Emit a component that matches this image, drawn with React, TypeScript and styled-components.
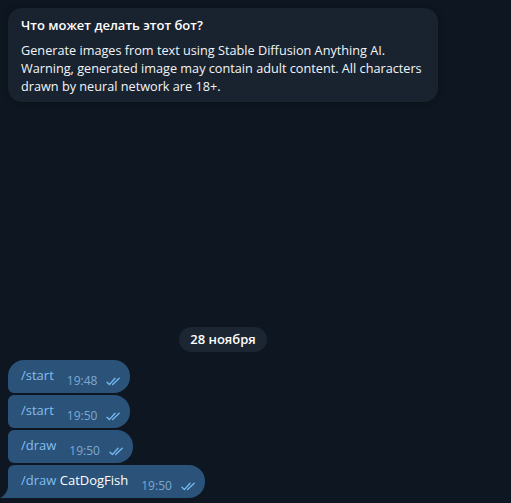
import React from "react";
import styled, { createGlobalStyle } from "styled-components";

const Global = createGlobalStyle`
  html, body { margin: 0; padding: 0; background: #0e1621; }
  body { font-family: "Open Sans", "Noto Sans", sans-serif; -webkit-font-smoothing: antialiased; }
  * { box-sizing: border-box; }
`;

const Page = styled.div`
  width: 511px;
  height: 503px;
  background: #0e1621;
  overflow: hidden;
  display: flex;
`;

const Chat = styled.div`
  width: 446px;
  height: 100%;
  padding: 8px 8px 5px 8px;
  display: flex;
  flex-direction: column;
`;

const InfoCard = styled.div`
  background: #19232f;
  border-radius: 14px;
  padding: 8px 13px 7px 13px;
  color: #ffffff;
  box-shadow: 0 0 6px rgba(0, 0, 0, 0.25);
`;

const InfoTitle = styled.div`
  font-weight: 600;
  font-size: 13px;
  line-height: 18px;
  margin-bottom: 7px;
`;

const InfoText = styled.div`
  font-size: 12.7px;
  line-height: 18px;
  color: #f2f5f8;
`;

const Spacer = styled.div`
  flex: 1;
`;

const DateRow = styled.div`
  display: flex;
  justify-content: center;
  margin-bottom: 8px;
`;

const DatePill = styled.div`
  height: 25px;
  padding: 0 11px;
  border-radius: 13px;
  background: #1b2632;
  color: #ffffff;
  font-weight: 600;
  font-size: 13px;
  line-height: 25px;
`;

const Messages = styled.div`
  display: flex;
  flex-direction: column;
  align-items: flex-start;
  gap: 2px;
`;

const Bubble = styled.div<{ $first?: boolean; $last?: boolean }>`
  position: relative;
  display: inline-flex;
  align-items: flex-end;
  background: #2b5278;
  padding: 6px 8px 4px 13px;
  border-radius: ${(p) => (p.$first ? "16px" : "6px")} 16px 16px
    ${(p) => (p.$last ? "0" : "6px")};
`;

const Tail = styled.svg`
  position: absolute;
  left: -8px;
  bottom: 0;
  width: 9px;
  height: 14px;
`;

const Text = styled.span`
  font-size: 13px;
  line-height: 18px;
  margin-bottom: 5px;
  color: #ffffff;
  white-space: nowrap;
`;

const Command = styled.span`
  color: #82bff0;
`;

const Meta = styled.span`
  display: inline-flex;
  align-items: center;
  margin-left: 13px;
  font-size: 12px;
  line-height: 16px;
  color: #7da8d3;
  white-space: nowrap;
`;

const Check = styled.svg`
  margin-left: 9px;
  width: 16px;
  height: 9px;
  margin-top: 1px;
`;

const DoubleCheck = () => (
  <Check viewBox="0 0 16 9" fill="none">
    <path d="M1 5.2 L3.4 7.6 L9 1.2" stroke="#72b8f0" strokeWidth="1.4" strokeLinecap="round" strokeLinejoin="round" />
    <path d="M6.6 7.6 L13.2 1.2" stroke="#72b8f0" strokeWidth="1.4" strokeLinecap="round" />
  </Check>
);

type Msg = { cmd: string; rest?: string; time: string };

const messages: Msg[] = [
  { cmd: "/start", time: "19:48" },
  { cmd: "/start", time: "19:50" },
  { cmd: "/draw", time: "19:50" },
  { cmd: "/draw", rest: "CatDogFish", time: "19:50" },
];

export default function App() {
  return (
    <>
      <Global />
      <Page>
        <Chat>
          <InfoCard>
            <InfoTitle>Что может делать этот бот?</InfoTitle>
            <InfoText>
              Generate images from text using Stable Diffusion Anything AI. Warning, generated image may
              contain adult content. All characters drawn by neural network are 18+.
            </InfoText>
          </InfoCard>
          <Spacer />
          <DateRow>
            <DatePill>28 ноября</DatePill>
          </DateRow>
          <Messages>
            {messages.map((m, i) => (
              <Bubble key={i} $first={i === 0} $last={i === messages.length - 1}>
                {i === messages.length - 1 && (
                  <Tail viewBox="0 0 9 14">
                    <path d="M9 0 L9 14 L0 14 C4 12.5 7.5 8 9 0 Z" fill="#2b5278" />
                  </Tail>
                )}
                <Text>
                  <Command>{m.cmd}</Command>
                  {m.rest ? " " + m.rest : null}
                </Text>
                <Meta>
                  {m.time}
                  <DoubleCheck />
                </Meta>
              </Bubble>
            ))}
          </Messages>
        </Chat>
      </Page>
    </>
  );
}
